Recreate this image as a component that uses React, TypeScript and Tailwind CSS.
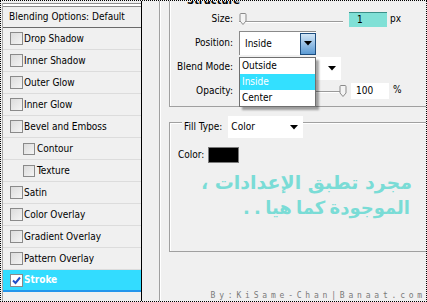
import React from "react";

type Effect = { label: string; indent?: boolean; checked?: boolean };

const effects: Effect[] = [
  { label: "Drop Shadow" },
  { label: "Inner Shadow" },
  { label: "Outer Glow" },
  { label: "Inner Glow" },
  { label: "Bevel and Emboss" },
  { label: "Contour", indent: true },
  { label: "Texture", indent: true },
  { label: "Satin" },
  { label: "Color Overlay" },
  { label: "Gradient Overlay" },
  { label: "Pattern Overlay" },
  { label: "Stroke", checked: true },
];

const CheckBox = ({ checked, small }: { checked?: boolean; small?: boolean }) => (
  <div
    className={`${small ? "w-[12px] h-[12px]" : "w-[13px] h-[13px]"} shrink-0 border border-[#8a8a8a] flex items-center justify-center ${
      checked ? "bg-white" : "bg-gradient-to-br from-[#dcdcdc] to-[#f4f4f4]"
    }`}
  >
    {checked && (
      <svg width="9" height="9" viewBox="0 0 9 9">
        <path d="M1 4.5 L3.5 7 L8 1.5" stroke="#1f4fc8" strokeWidth="2" fill="none" />
      </svg>
    )}
  </div>
);

const Thumb = () => (
  <svg width="8" height="12" viewBox="0 0 8 12" className="shrink-0">
    <path d="M1 1.5 Q1 0.5 2 0.5 H6 Q7 0.5 7 1.5 V8 L4 11.5 L1 8 Z" fill="#f4f4f4" stroke="#8a8a8a" />
  </svg>
);

const Arrow = () => (
  <svg width="8" height="5" viewBox="0 0 8 5">
    <path d="M0 0 H8 L4 4.5 Z" fill="#000" />
  </svg>
);

const LeftPanel = () => (
  <div className="w-[141px] shrink-0 border-r border-black h-full">
    <div className="ml-[1px] border-l border-[#a8a8a8] h-full">
      <div className="mt-[2px] h-[4px] border-t border-b border-[#8c8c8c] bg-white" />
      <div className="h-[21px] flex items-center pl-[6px] border-b border-[#6a6a6a]">
        Blending Options: Default
      </div>
      {effects.map((e) =>
        e.checked ? (
          <div
            key={e.label}
            className="h-[22px] flex items-center gap-[1px] pl-[7px] bg-[#33dcff] border-b-2 border-[#2496ec] font-bold text-white"
          >
            <CheckBox checked />
            <span>{e.label}</span>
          </div>
        ) : (
          <div
            key={e.label}
            className={`h-[22px] flex items-center gap-[1px] border-b border-[#dcdcdc] ${e.indent ? "pl-[20px]" : "pl-[7px]"}`}
          >
            <CheckBox small={e.indent} />
            <span className={e.indent ? "ml-[1px]" : ""}>{e.label}</span>
          </div>
        )
      )}
    </div>
  </div>
);

const Structure = () => (
  <div className="relative -mt-[4px] border-t border-l border-b border-[#a0a0a0] shadow-[inset_1px_1px_0_#fff] pt-[12px] pb-[7px]">
    <div className="absolute -top-[3px] left-[15px] px-[2px] font-bold text-[11px] bg-[#f0f0f0]">Structure</div>

    <div className="flex flex-col">
      <div className="h-[18px] flex items-center">
        <div className="w-[63px] text-right">Size:</div>
        <div className="ml-[6px] w-[104px] relative flex items-center">
          <div className="absolute left-0 right-0 top-[8px] h-[2px] border-t border-[#9a9a9a] border-b border-b-white" />
          <div className="relative"><Thumb /></div>
        </div>
        <div className="ml-[6px] w-[38px] h-[15px] bg-[#80e0d6] border-t border-[#3a8f88] pl-[8px] leading-[14px]">1</div>
        <div className="ml-[3px]">px</div>
      </div>

      <div className="mt-[3px] h-[24px] flex items-center">
        <div className="w-[63px] text-right">Position:</div>
        <div className="ml-[6px] w-[77px] h-[24px] bg-white border-t border-l border-[#8a8a8a] flex items-center">
          <span className="pl-[5px] flex-1">Inside</span>
          <div className="w-[16px] h-[22px] border border-[#1d4d7e] bg-gradient-to-b from-[#d2e6f6] to-[#5c9bd4] flex items-center justify-center">
            <Arrow />
          </div>
        </div>
      </div>

      <div className="mt-[2px] h-[23px] flex items-center">
        <div className="w-[63px] text-right -mt-[3px]">Blend Mode:</div>
        <div className="ml-[6px] w-[102px] h-[23px] bg-white flex items-center justify-end pr-[5px]">
          <Arrow />
        </div>
      </div>

      <div className="mt-[3px] h-[16px] flex items-center">
        <div className="w-[63px] text-right">Opacity:</div>
        <div className="ml-[6px] w-[108px] relative flex items-center justify-end">
          <div className="absolute left-0 right-[4px] top-[6px] h-[2px] border-t border-[#9a9a9a] border-b border-b-white" />
          <div className="relative"><Thumb /></div>
        </div>
        <div className="ml-[4px] w-[38px] h-[16px] bg-white pl-[5px] leading-[16px]">100</div>
        <div className="ml-[4px] -mt-[3px]">%</div>
      </div>
    </div>

    <div className="absolute left-[69px] top-[59px] w-[77px] bg-white border border-[#6f6f6f] shadow-[3px_3px_2px_rgba(0,0,0,0.35)]">
      <div className="h-[16px] pl-[2px] leading-[16px]">Outside</div>
      <div className="h-[16px] pl-[2px] leading-[16px] bg-[#33e0ff] text-white">Inside</div>
      <div className="h-[16px] pl-[2px] leading-[16px]">Center</div>
    </div>
  </div>
);

const FillType = () => (
  <div className="relative mt-[15px] h-[130px] border-t border-l border-b border-[#a0a0a0] shadow-[inset_1px_1px_0_#fff] pt-[24px]">
    <div className="absolute -top-[7px] left-[12px] flex items-center bg-[#f0f0f0] pl-[2px]">
      <span>Fill Type:</span>
      <div className="ml-[6px] w-[75px] h-[22px] bg-white flex items-center justify-between pl-[3px] pr-[5px]">
        <span>Color</span>
        <Arrow />
      </div>
    </div>
    <div className="h-[16px] flex items-center pl-[8px]">
      <span>Color:</span>
      <div className="ml-[4px] w-[31px] h-[16px] bg-black border border-[#7a7a7a]" />
    </div>
    <div
      dir="rtl"
      className="mt-[7px] pr-[14px] text-right text-[#7adcd6] font-bold text-[19px] leading-[25px] font-['DejaVu_Sans',sans-serif]"
    >
      <div>مجرد تطبق الإعدادات ،</div>
      <div className="text-[18px] [word-spacing:-2px] pr-[2px]">الموجودة كما هيا . .</div>
    </div>
  </div>
);

export default function App() {
  return (
    <div className="w-[427px] h-[302px] overflow-hidden bg-[#f0f0f0] border border-dotted border-black flex text-[10px] text-black font-['DejaVu_Sans_Condensed','Liberation_Sans',Arial,sans-serif] leading-none">
      <LeftPanel />
      <div className="flex-1 pl-[17px] h-full">
        <div className="h-full border-l border-[#a0a0a0]">
          <div className="h-full border-l border-white pl-[8px] flex flex-col">
            <Structure />
            <FillType />
            <div className="mt-auto mb-[1px] flex justify-end text-[8px] tracking-[3.8px] text-[#7a7a7a] font-['DejaVu_Sans_Mono',monospace]">
              By:KiSame-Chan|Banaat.com
            </div>
          </div>
        </div>
      </div>
    </div>
  );
}
